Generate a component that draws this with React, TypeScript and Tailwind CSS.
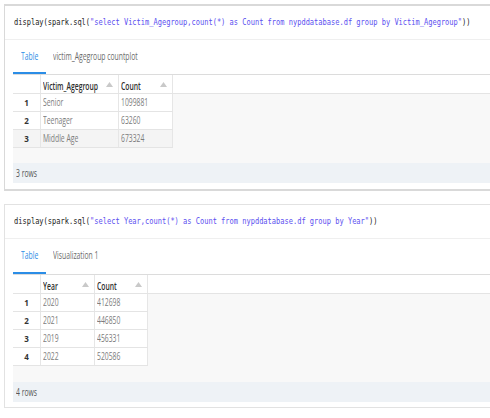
import React from "react";

const sans = "font-['Open_Sans',sans-serif]";

function Sq({ children, className = "" }: { children: React.ReactNode; className?: string }) {
  return (
    <span className={"inline-block origin-left scale-x-[0.68] whitespace-nowrap " + className}>
      {children}
    </span>
  );
}

function SortArrow() {
  return (
    <svg width="7" height="5" viewBox="0 0 7 5" className="shrink-0">
      <path d="M3.5 0 L7 5 L0 5 Z" fill="#c9c9c9" />
    </svg>
  );
}

type Col = { name: string; width: string };

function Cell({
  query,
  tab2,
  cols,
  rows,
  footer,
  shaded,
  first,
}: {
  query: string;
  tab2: string;
  cols: Col[];
  rows: string[][];
  footer: string;
  shaded?: number;
  first?: boolean;
}) {
  return (
    <div
      className={
        first
          ? "ml-[4px] mt-[4px] w-[520px] border-l border-t-2 border-b-2 border-[#d9d9d9] bg-white"
          : "ml-[4px] mt-[13px] w-[520px] border-l border-t border-b border-[#e2e2e2] bg-white"
      }
    >
      <div className="h-[34px] flex items-center pl-[9px] border-b border-[#efefef]">
        <span className="inline-block origin-left scale-x-[0.78] whitespace-nowrap font-['DejaVu_Sans_Mono',monospace] text-[9px] text-[#222]">
          display(spark.sql(
          <span className="text-[#5b4ff0]">"{query}"</span>
          ))
        </span>
      </div>
      <div className={"pl-[8px] " + (first ? "pb-[6px]" : "pb-[5px]")}>
        <div className={(first ? "h-[34px]" : "h-[35px]") + " flex items-stretch"}>
          <div className="w-[33px] border-b-2 border-[#2b8de6] flex items-center pl-[8px] overflow-visible">
            <Sq className={sans + " text-[10px] text-[#2b8de6]"}>Table</Sq>
          </div>
          <div className="flex items-center pl-[7px] pb-[2px]">
            <Sq className={sans + " text-[10px] text-[#6b6b6b]"}>{tab2}</Sq>
          </div>
        </div>
        <div className="border-t border-[#dcdcdc] bg-[#f8f8f8]">
          <div className="flex h-[19px] bg-white border-b border-[#e4e4e4]">
            <div className="w-[28px] border-r border-[#e6e6e6]" />
            {cols.map((c) => (
              <div
                key={c.name}
                className={c.width + " flex items-center pl-[2px] pr-[5px] border-r border-[#e6e6e6]"}
              >
                <div className="flex-1 min-w-0 overflow-visible">
                  <Sq className={sans + " text-[10px] font-semibold text-[#2f2f2f]"}>{c.name}</Sq>
                </div>
                <SortArrow />
              </div>
            ))}
          </div>
          {rows.map((r, i) => (
            <div
              key={i}
              className={
                "flex h-[18px] w-fit border-b border-[#e4e4e4] " + (shaded === i ? "bg-[#f4f4f4]" : "bg-white")
              }
            >
              <div className="w-[28px] flex items-center justify-center border-r border-[#e6e6e6] font-['Open_Sans',sans-serif] text-[8px] font-bold text-[#333]">
                {i + 1}
              </div>
              {r.map((v, j) => (
                <div key={j} className={cols[j].width + " flex items-center pl-[2px] border-r border-[#e6e6e6] overflow-visible"}>
                  <Sq className={sans + " text-[10px] text-[#7c7c7c]"}>{v}</Sq>
                </div>
              ))}
            </div>
          ))}
          <div className={first ? "h-[15px]" : "h-[16px]"} />
        </div>
        <div className="h-[20px] bg-[#eef2f6] flex items-center pl-[3px]">
          <Sq className={sans + " text-[10px] text-[#555]"}>{footer}</Sq>
        </div>
      </div>
    </div>
  );
}

export default function App() {
  return (
    <div className="w-[490px] h-[418px] overflow-hidden bg-white">
      <Cell
        first
        query="select Victim_Agegroup,count(*) as Count from nypddatabase.df group by Victim_Agegroup"
        tab2="victim_Agegroup countplot"
        cols={[
          { name: "Victim_Agegroup", width: "w-[78px]" },
          { name: "Count", width: "w-[54px]" },
        ]}
        rows={[
          ["Senior", "1099881"],
          ["Teenager", "63260"],
          ["Middle Age", "673324"],
        ]}
        shaded={2}
        footer="3 rows"
      />
      <Cell
        query="select Year,count(*) as Count from nypddatabase.df group by Year"
        tab2="Visualization 1"
        cols={[
          { name: "Year", width: "w-[54px]" },
          { name: "Count", width: "w-[53px]" },
        ]}
        rows={[
          ["2020", "412698"],
          ["2021", "446850"],
          ["2019", "456331"],
          ["2022", "520586"],
        ]}
        footer="4 rows"
      />
    </div>
  );
}
